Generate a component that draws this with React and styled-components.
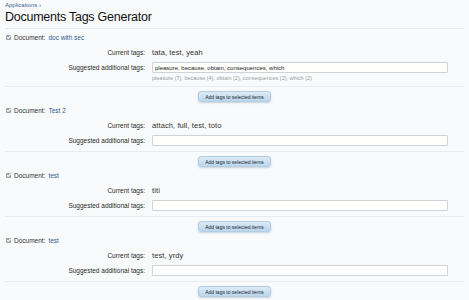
import styled, { createGlobalStyle } from 'styled-components'

const Global = createGlobalStyle`
  html, body {
    margin: 0;
    padding: 0;
    background: #f9fafc;
  }
  body {
    font-family: "Liberation Sans", Arial, sans-serif;
    color: #333;
  }
`

const Page = styled.div`
  padding: 1px 5px 0 5px;
  width: 469px;
  box-sizing: border-box;
`

const Crumb = styled.div`
  font-size: 6px;
  color: #3a6590;
  line-height: 8px;
`

const Title = styled.h1`
  margin: 0 0 2px;
  font-size: 12.5px;
  letter-spacing: -0.25px;
  font-weight: normal;
  color: #111;
  line-height: 16px;
  padding: 0 0 3px;
  border-bottom: 1px solid #e6eaf0;
`

const Item = styled.section`
  display: flex;
  flex-direction: column;
`

const DocHead = styled.div`
  display: flex;
  align-items: center;
  gap: 2px;
  font-size: 6.5px;
  color: #333;
  height: 12px;
  a {
    color: #2b5c8e;
    text-decoration: none;
    margin-left: 1px;
  }
`

const Check = styled.span`
  width: 5px;
  height: 5px;
  border-radius: 1px;
  background: #9aa1a8;
  display: inline-block;
  margin: 0 1px;
  position: relative;
  &::after {
    content: '';
    position: absolute;
    left: 1.5px;
    top: 0.3px;
    width: 1.2px;
    height: 2.5px;
    border: solid #fff;
    border-width: 0 0.8px 0.8px 0;
    transform: rotate(45deg);
  }
`

const Row = styled.div`
  display: grid;
  grid-template-columns: 140px 1fr;
  column-gap: 7px;
  align-items: center;
  font-size: 6.5px;
  height: ${p => p.$h}px;
`

const Label = styled.div`
  text-align: right;
  color: #2a2a2a;
`

const Value = styled.div`
  color: #333;
  font-size: 7.5px;
  letter-spacing: 0.1px;
`

const Input = styled.div`
  width: 296px;
  height: 11px;
  box-sizing: border-box;
  background: #fffffd;
  border: 1px solid #cfd2d6;
  border-radius: 1px;
  padding: 0 2px;
  display: flex;
  align-items: center;
  color: #222;
  font-size: 6px;
`

const Hint = styled.div`
  padding-left: 147px;
  font-size: 5.5px;
  color: #9a9a9a;
  height: 8px;
  line-height: 8px;
`

const Sep = styled.hr`
  border: 0;
  border-top: 1px solid #e8ecf1;
  margin: 4px 0 0 0;
`

const ButtonRow = styled.div`
  display: flex;
  justify-content: center;
  padding: 4px 0 2px;
`

const Button = styled.button`
  font-family: inherit;
  font-size: 5px;
  color: #1a2430;
  height: 11px;
  padding: 0 6px;
  border-radius: 3px;
  border: 1px solid #b3cde3;
  background: linear-gradient(#dcebf7, #bcd6ec);
  box-shadow: 0 1px 2px rgba(80, 110, 140, 0.3);
`

const docs = [
  {
    name: 'doc with sec',
    current: 'tata, test, yeah',
    suggested: 'pleasure, because, obtain, consequences, which',
    hint: 'pleasure (7), because (4), obtain (2), consequences (2), which (2)',
  },
  { name: 'Test 2', current: 'attach, full, test, toto', suggested: '' },
  { name: 'test', current: 'titi', suggested: '' },
  { name: 'test', current: 'test, yrdy', suggested: '' },
]

const App = () => {
  return (
    <Page>
      <Global />
      <Crumb>Applications ›</Crumb>
      <Title>Documents Tags Generator</Title>
      {docs.map((d, i) => (
        <Item key={i}>
          <DocHead>
            <Check />
            Document:<a href="#">{d.name}</a>
          </DocHead>
          <Row $h={18}>
            <Label>Current tags:</Label>
            <Value>{d.current}</Value>
          </Row>
          <Row $h={13}>
            <Label>Suggested additional tags:</Label>
            <Input>{d.suggested}</Input>
          </Row>
          {d.hint && <Hint>{d.hint}</Hint>}
          <Sep />
          <ButtonRow>
            <Button>Add tags to selected items</Button>
          </ButtonRow>
        </Item>
      ))}
    </Page>
  )
}

export default App
